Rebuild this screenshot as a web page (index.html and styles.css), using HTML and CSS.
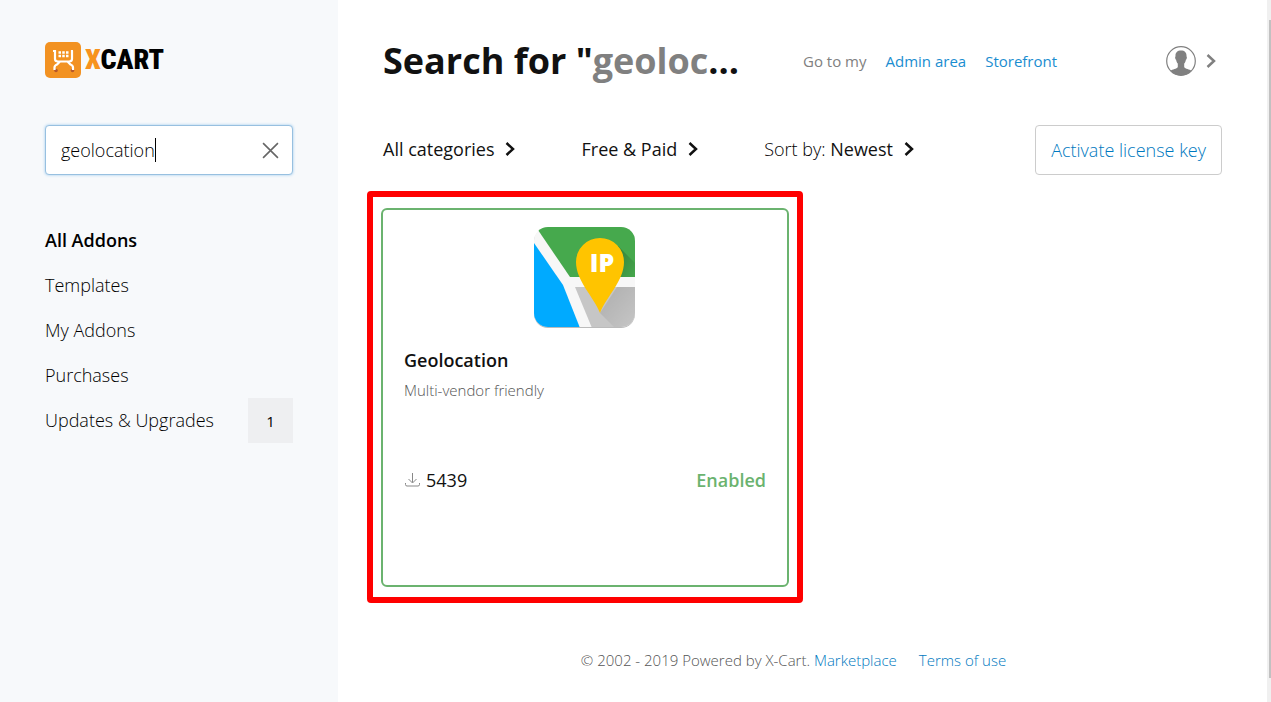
FILE: index.html
```html
<!DOCTYPE html>
<html lang="en">
<head>
<meta charset="utf-8">
<title>Addons</title>
<link rel="stylesheet" href="styles.css">
</head>
<body>
<div class="layout">
  <aside class="sidebar">
    <a class="logo" href="#">
      <svg class="logo-mark" viewBox="0 0 36 36" aria-hidden="true">
        <rect width="36" height="36" rx="5" fill="#f29222"/>
        <circle cx="11" cy="28.500" r="1.800" fill="#b5572a"/><circle cx="27.500" cy="28.500" r="1.800" fill="#b5572a"/>
        <path d="M8 9h2v8q0 2.500 3 2.500h11q3 0 3-2.500V9h1M9.500 28v-2.500q0-2 2.500-3l3-3M28 28v-2.500q0-2-2.500-3l-3-3" fill="none" stroke="#fff" stroke-width="2.200"/>
        <path d="M13.500 10.500h10M13.500 14h10" stroke="#fff" stroke-width="2.500" stroke-dasharray="2.500 1.250"/>
      </svg>
      <span class="logo-text"><span class="logo-x">X</span>CART</span>
    </a>
    <form class="search">
      <input class="search-input" type="text" value="geolocation" aria-label="Search addons">
      <span class="caret"></span>
      <button class="search-clear" type="button" aria-label="Clear search">
        <svg class="icon-clear" viewBox="0 0 16 16"><path d="M1 1l14 14M15 1L1 15" fill="none" stroke="#666" stroke-width="1.500"/></svg>
      </button>
    </form>
    <nav class="menu">
      <a class="menu-item active" href="#">All Addons</a>
      <a class="menu-item" href="#">Templates</a>
      <a class="menu-item" href="#">My Addons</a>
      <a class="menu-item" href="#">Purchases</a>
      <a class="menu-item" href="#">Updates &amp; Upgrades<span class="count">1</span></a>
    </nav>
  </aside>
  <div class="page">
    <header class="header">
      <h1 class="title">Search for "<span class="term">geoloc</span>...</h1>
      <nav class="goto"><span>Go to my</span><a href="#">Admin area</a><a href="#">Storefront</a></nav>
      <button class="account" type="button" aria-label="Account">
        <svg class="avatar" viewBox="0 0 30 30"><circle cx="15" cy="15" r="14.300" fill="#fff" stroke="#808080" stroke-width="1.200"/><path d="M15 4.500c4 0 5.800 2.400 5.500 6 .7.300.4 2.900-.6 3.300-.3 1.900-.9 3-1.700 3.800v3.400c1 2 5.400 2.100 7.300 3.800a14.300 14.300 0 0 1-21 0c1.900-1.700 6.300-1.800 7.300-3.800v-3.400c-.8-.8-1.400-1.900-1.700-3.800-1-.4-1.300-3-.6-3.300-.3-3.600 1.500-6 5.500-6z" fill="#808080"/></svg>
        <svg class="chevron" viewBox="0 0 10 14"><path d="M1.500 1L8 7l-6.500 6" fill="none" stroke="#808080" stroke-width="2.500"/></svg>
      </button>
    </header>
    <div class="filters">
      <button class="filter" type="button">All categories<svg class="chevron" viewBox="0 0 10 14"><path d="M1.500 1L8 7l-6.500 6" fill="none" stroke="#111" stroke-width="2.500"/></svg></button>
      <button class="filter" type="button">Free &amp; Paid<svg class="chevron" viewBox="0 0 10 14"><path d="M1.500 1L8 7l-6.500 6" fill="none" stroke="#111" stroke-width="2.500"/></svg></button>
      <button class="filter" type="button"><span><span class="light">Sort by:</span> Newest</span><svg class="chevron" viewBox="0 0 10 14"><path d="M1.500 1L8 7l-6.500 6" fill="none" stroke="#111" stroke-width="2.500"/></svg></button>
      <button class="activate" type="button">Activate license key</button>
    </div>
    <main class="results">
      <div class="highlight">
        <article class="card">
          <svg class="card-image" viewBox="0 0 102 102" role="img" aria-label="Geolocation">
            <defs>
              <clipPath id="tile"><rect x="0" y="1" width="101" height="100" rx="14"/></clipPath>
              <linearGradient id="shade" x1="0" y1="0" x2="1" y2="1"><stop offset="0" stop-color="#000" stop-opacity=".25"/><stop offset="1" stop-color="#000" stop-opacity="0"/></linearGradient>
            </defs>
            <rect x="0" y="2" width="101" height="100" rx="14" fill="#bbb"/>
            <g clip-path="url(#tile)">
              <path d="M0 0h102v102H0z" fill="#f7f7f7"/>
              <path d="M4 0h98v51H36L4 4z" fill="#46a94d"/>
              <path d="M0 17l29 42 17 43H0z" fill="#00aaff"/>
              <path d="M41 61h61v41H58z" fill="#c6c6c6"/>
              <path d="M84 20l18 18v13H84z" fill="url(#shade)"/>
              <path d="M66 87l17-26h19v41H81z" fill="url(#shade)" opacity=".5"/>
            </g>
            <path d="M66 87C60 71 42 55 42 36a24 24 0 0 1 48 0c0 19-18 35-24 51z" fill="#ffc400"/>
            <text class="pin-text" x="68" y="46" text-anchor="middle">IP</text>
          </svg>
          <h2 class="card-title">Geolocation</h2>
          <p class="card-note">Multi-vendor friendly</p>
          <div class="card-footer">
            <span class="downloads"><svg class="icon-download" viewBox="0 0 16 16"><path d="M8 1v9.500M4 7l4 4 4-4M1 11v1.500q0 1.500 1.500 1.500h11q1.500 0 1.500-1.500V11" fill="none" stroke="#888"/></svg>5439</span>
            <span class="status">Enabled</span>
          </div>
        </article>
      </div>
    </main>
    <footer class="footer"><span>© 2002 - 2019 Powered by X-Cart. <a href="#">Marketplace</a></span><a href="#">Terms of use</a></footer>
  </div>
  <div class="scroll-track"><div class="scroll-thumb"></div></div>
</div>
</body>
</html>
```
FILE: styles.css
```css
* { box-sizing: border-box; }
body { margin: 0; font-family: "Open Sans", sans-serif; font-size: 18px; line-height: 24px; color: #111; background: #fff; }
a { color: #1a8dd0; text-decoration: none; }
button { padding: 0; border: 0; background: none; font: inherit; color: inherit; }
svg { display: block; flex: none; }
.layout { display: flex; min-height: 100vh; }
.sidebar { flex: none; width: 338px; padding: 42px 45px; background: #f7f9fb; }
.logo { display: flex; align-items: center; gap: 4px; height: 36px; color: #000; }
.logo-mark { width: 36px; height: 36px; }
.logo-text { font-family: "Roboto Condensed", "Liberation Sans Narrow", "Liberation Sans", sans-serif; font-size: 28px; font-weight: 900; }
.logo-x { color: #f7931e; }
.search { position: relative; margin-top: 47px; }
.search-input { display: block; width: 100%; height: 50px; padding: 0 48px 0 15px; border: 1px solid #98c0e0; border-radius: 4px; background: #fff; box-shadow: 0 0 3px #98c8ee; font: inherit; font-weight: 300; color: #000; outline: 0; }
.caret { position: absolute; left: 110px; top: 13px; width: 1px; height: 24px; background: #000; }
.search-clear { position: absolute; right: 14px; top: 17px; }
.icon-clear { width: 17px; height: 17px; }
.menu { display: flex; flex-direction: column; margin-top: 43px; }
.menu-item { display: flex; align-items: center; justify-content: space-between; height: 45px; padding-bottom: 2px; font-weight: 300; color: #000; }
.menu-item.active { font-weight: 600; }
.count { display: grid; place-items: center; width: 45px; height: 45px; margin-bottom: -2px; background: #eeeff1; font-size: 15px; font-weight: 400; }
.page { display: flex; flex: 1; flex-direction: column; min-width: 0; padding: 35px 45px 0; }
.header { display: flex; align-items: center; height: 52px; }
.title { flex: none; width: 420px; margin: 0; font-size: 36px; line-height: 48px; font-weight: 700; white-space: nowrap; }
.term { color: #808080; }
.goto { display: flex; gap: 19px; font-size: 15px; color: #808080; }
.account { display: flex; align-items: center; gap: 10px; margin-left: auto; margin-right: 6px; }
.avatar { width: 30px; height: 30px; }
.chevron { width: 10px; height: 14px; }
.filters { display: flex; align-items: center; gap: 66px; margin-top: 38px; }
.filter { display: flex; align-items: center; gap: 11px; padding-bottom: 2px; font-weight: 500; white-space: nowrap; }
.light { font-weight: 300; color: #000; }
.activate { height: 50px; margin-left: auto; padding: 0 15px; border: 1px solid #ccc; border-radius: 4px; font-weight: 300; color: #0079c0; white-space: nowrap; }
.results { margin: 16px 0 0 -16px; }
.highlight { width: 436px; padding: 11px 8px 10px; border: 6px solid #f00; border-radius: 4px; }
.card { display: flex; flex-direction: column; height: 379px; padding: 16px 21px; border: 2px solid #6bb36f; border-radius: 6px; }
.card-image { align-self: center; width: 102px; height: 102px; }
.pin-text { font-family: "Open Sans", sans-serif; font-size: 25px; font-weight: 800; fill: #fff; }
.card-title { margin: 20px 0 0; font-size: 18px; line-height: 24px; font-weight: 600; }
.card-note { margin: 6px 0 0; font-size: 15px; line-height: 24px; font-weight: 300; color: #555; }
.card-footer { display: flex; justify-content: space-between; margin-top: 66px; }
.downloads { display: flex; align-items: center; gap: 5px; }
.icon-download { width: 17px; height: 16px; }
.status { font-weight: 600; color: #6bb36f; }
.footer { display: flex; justify-content: center; gap: 22px; margin-top: 45px; padding-right: 18px; font-size: 15px; font-weight: 300; color: #555; }
.footer a { color: #0079c0; }
.scroll-track { flex: none; width: 4px; padding: 20px 0 24px 2px; background: #f0f0f0; }
.scroll-thumb { height: 100%; background: #c1c1c1; }
```
